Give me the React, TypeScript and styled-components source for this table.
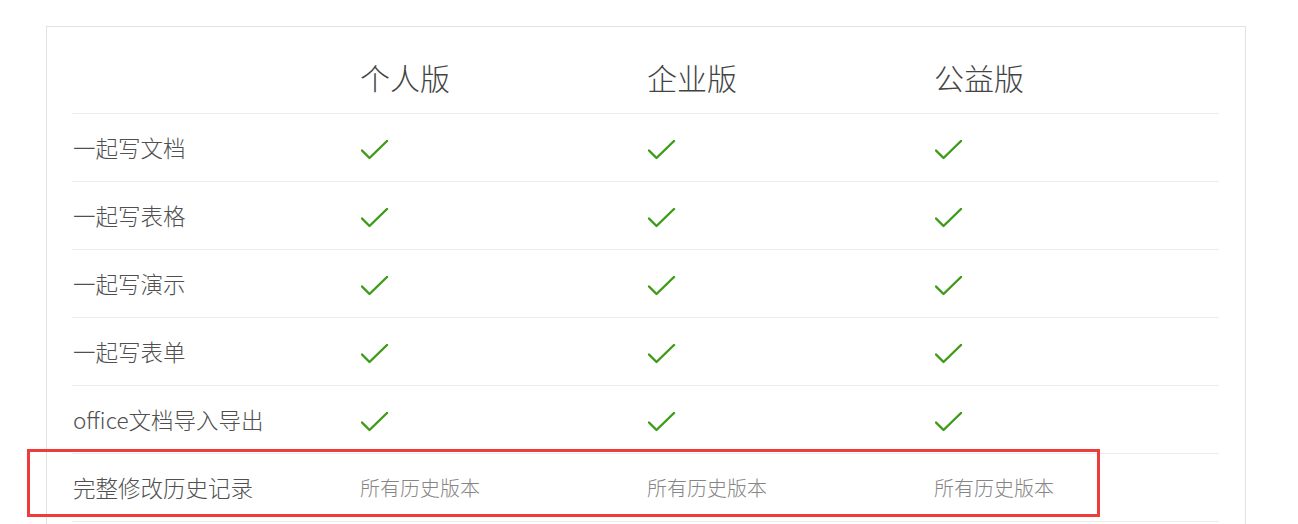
import React from "react";
import styled, { createGlobalStyle } from "styled-components";

const Global = createGlobalStyle`
  html, body { margin: 0; padding: 0; background: #fff; }
  body { font-family: "Noto Sans CJK SC", "Noto Sans", sans-serif; overflow: hidden; }
`;

const Page = styled.div`
  position: relative;
  padding: 26px 0 0 46px;
  height: 498px;
  overflow: hidden;
`;

const Card = styled.div`
  width: 1200px;
  border: 1px solid #e2e2e2;
  padding: 0 26px 40px 25px;
  box-sizing: border-box;
  background: #fff;
`;

const Row = styled.div<{ $head?: boolean }>`
  display: grid;
  grid-template-columns: repeat(4, 287px);
  height: ${(p) => (p.$head ? "86px" : "67px")};
  align-items: center;
  border-bottom: 1px solid #ececec;
`;

const HeadCell = styled.div`
  font-size: 30px;
  font-weight: 300;
  color: #444;
  padding-left: 1px;
  padding-top: 14px;
  line-height: 1;
`;

const Label = styled.div`
  font-size: 22.5px;
  font-weight: 300;
  color: #505050;
  padding-left: 1px;
  line-height: 1;
`;

const Sub = styled.div`
  font-size: 20px;
  font-weight: 300;
  color: #858585;
  padding-left: 1px;
  line-height: 1;
`;

const CheckWrap = styled.div`
  padding-left: 2px;
  padding-top: 4px;
  display: flex;
  align-items: center;
`;

const Highlight = styled.div`
  position: absolute;
  left: 27px;
  top: 449px;
  width: 1073px;
  height: 68px;
  border: 3px solid #ee3b3b;
  box-sizing: border-box;
  pointer-events: none;
`;

const Check = () => (
  <CheckWrap>
    <svg width="28" height="20" viewBox="0 0 28 20">
      <path
        d="M1 10.5 L8.5 18 L26 1"
        fill="none"
        stroke="#3d9c17"
        strokeWidth="2.4"
        strokeLinecap="round"
        strokeLinejoin="round"
      />
    </svg>
  </CheckWrap>
);

const features = ["一起写文档", "一起写表格", "一起写演示", "一起写表单", "office文档导入导出"];
const plans = ["个人版", "企业版", "公益版"];

export default function App() {
  return (
    <Page>
      <Global />
      <Card>
        <Row $head>
          <div />
          {plans.map((p) => (
            <HeadCell key={p}>{p}</HeadCell>
          ))}
        </Row>
        {features.map((f) => (
          <Row key={f}>
            <Label>{f}</Label>
            {plans.map((p) => (
              <Check key={p} />
            ))}
          </Row>
        ))}
        <Row>
          <Label>完整修改历史记录</Label>
          {plans.map((p) => (
            <Sub key={p}>所有历史版本</Sub>
          ))}
        </Row>
      </Card>
      <Highlight />
    </Page>
  );
}
